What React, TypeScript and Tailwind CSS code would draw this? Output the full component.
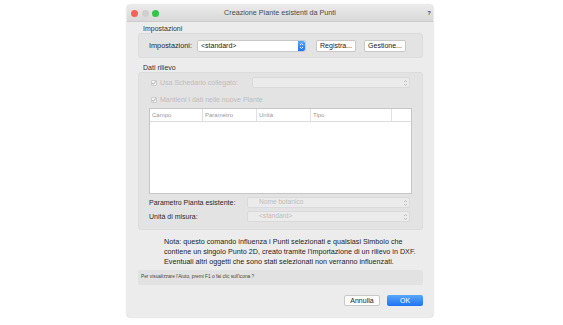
const font = "font-['Liberation_Sans',Arial,sans-serif]"

function Stepper({ active }: { active?: boolean }) {
  if (active) {
    return (
      <div className="flex h-full w-[7px] items-center justify-center rounded-r-[2px] bg-gradient-to-b from-[#5aa6fb] to-[#1f73f1]">
        <svg width="5" height="8" viewBox="0 0 5 8" fill="none">
          <path d="M1 3 L2.5 1.5 L4 3" stroke="white" strokeWidth="0.9" />
          <path d="M1 5 L2.5 6.5 L4 5" stroke="white" strokeWidth="0.9" />
        </svg>
      </div>
    )
  }
  return (
    <div className="flex h-full w-[8px] items-center justify-center">
      <svg width="5" height="8" viewBox="0 0 5 8" fill="none">
        <path d="M1 3 L2.5 1.5 L4 3" stroke="#b4b4b4" strokeWidth="0.8" />
        <path d="M1 5 L2.5 6.5 L4 5" stroke="#b4b4b4" strokeWidth="0.8" />
      </svg>
    </div>
  )
}

function DisabledSelect({ value, className }: { value?: string; className: string }) {
  return (
    <div className={`flex h-[11px] items-center rounded-[2px] border border-[#dadada] bg-[#ebebeb] ${className}`}>
      <span className="flex-1 pl-[11px] text-[6.6px] leading-none text-[#bcbcbc]">{value}</span>
      <Stepper />
    </div>
  )
}

function Check() {
  return (
    <div className="flex h-[6px] w-[6px] items-center justify-center rounded-[1px] border border-[#cccccc] bg-[#f4f4f4]">
      <svg width="6" height="6" viewBox="0 0 6 6" fill="none" className="shrink-0">
        <path d="M1.2 3.1 L2.4 4.3 L4.8 1.4" stroke="#999" strokeWidth="0.9" />
      </svg>
    </div>
  )
}

export default function App() {
  return (
    <div className={`h-[325px] w-[563px] overflow-hidden bg-white pl-[127px] pt-[5px] ${font}`}>
      <div className="flex h-[312px] w-[306px] flex-col rounded-[3px] bg-[#ececec] shadow-[0_0_2px_rgba(0,0,0,0.3)]">
        {/* title bar */}
        <div className="grid h-[17px] grid-cols-[40px_1fr_40px] items-center rounded-t-[3px] border-b border-[#cdcdcd] bg-gradient-to-b from-[#ebebeb] to-[#d8d8d8]">
          <div className="flex items-center gap-[3.5px] pl-[4px]">
            <span className="h-[7px] w-[7px] rounded-full bg-[#fc5f57]" />
            <span className="h-[7px] w-[7px] rounded-full bg-[#cfcfcf]" />
            <span className="h-[7px] w-[7px] rounded-full bg-[#31c648]" />
          </div>
          <div className="text-center text-[7.2px] leading-none text-[#4a4a4a]">
            Creazione Piante esistenti da Punti
          </div>
          <div className="pr-[2px] text-right text-[6px] font-bold leading-none text-[#444]">?</div>
        </div>

        <div className="flex flex-col pl-[11px] pr-[10px] text-[#2c2c2c]">
          <div className="mt-[2px] h-[9px] pl-[5px] text-[7px] leading-[9px] text-[#333]">Impostazioni</div>
          <div className="flex h-[25px] items-center rounded-[3px] border border-[#dcdcdc] bg-[#e3e3e3] pl-[10px]">
            <span className="w-[48px] text-[7.3px] font-medium leading-none text-[#2a2a2a]">Impostazioni:</span>
            <div className="flex h-[12px] w-[109px] items-center rounded-[2px] border border-[#c9c9c9] bg-white">
              <span className="flex-1 pl-[3px] text-[7px] leading-none text-[#222]">&lt;standard&gt;</span>
              <Stepper active />
            </div>
            <button className="ml-[10px] flex h-[12px] w-[40px] items-center justify-center rounded-[2px] border border-[#c8c8c8] bg-white text-[7px] leading-none text-[#222]">
              Registra...
            </button>
            <button className="ml-[8px] flex h-[12px] w-[42px] items-center justify-center rounded-[2px] border border-[#c8c8c8] bg-white text-[7px] leading-none text-[#222]">
              Gestione...
            </button>
          </div>

          <div className="mt-[5px] h-[9px] pl-[5px] text-[7px] leading-[9px] text-[#333]">Dati rilievo</div>
          <div className="flex h-[158px] flex-col rounded-[3px] border border-[#dcdcdc] bg-[#e3e3e3] pl-[10px] pr-[10px] pt-[4px]">
            <div className="flex h-[11px] items-center">
              <div className="ml-[2px]"><Check /></div>
              <span className="ml-[3px] w-[92px] text-[7px] leading-none text-[#bdbdbd]">Usa Schedario collegato:</span>
              <DisabledSelect className="ml-auto mr-[2px] w-[158px]" />
            </div>
            <div className="mt-[6px] flex h-[11px] items-center">
              <div className="ml-[2px]"><Check /></div>
              <span className="ml-[3px] text-[7px] leading-none text-[#bdbdbd]">Mantieni i dati nelle nuove Piante</span>
            </div>
            <div className="mt-[3px] flex h-[86px] flex-col border border-[#c6c6c6] bg-white">
              <div className="grid h-[13px] grid-cols-[53px_54px_54px_81px_1fr] border-b border-[#dcdcdc] text-[6px] leading-none text-[#999]">
                <div className="flex items-center border-r border-[#e0e0e0] pl-[2px]">Campo</div>
                <div className="flex items-center border-r border-[#e0e0e0] pl-[2px]">Parametro</div>
                <div className="flex items-center border-r border-[#e0e0e0] pl-[2px]">Unità</div>
                <div className="flex items-center border-r border-[#e0e0e0] pl-[2px]">Tipo</div>
                <div />
              </div>
            </div>
            <div className="mt-[3px] flex h-[11px] items-center">
              <span className="w-[98px] text-[7px] leading-none text-[#2a2a2a]">Parametro Pianta esistente:</span>
              <DisabledSelect value="Nome botanico" className="mr-[2px] flex-1" />
            </div>
            <div className="mt-[3px] flex h-[11px] items-center">
              <span className="w-[98px] text-[7px] leading-none text-[#2a2a2a]">Unità di misura:</span>
              <DisabledSelect value="<standard>" className="mr-[2px] flex-1" />
            </div>
          </div>

          <div className="mt-[7px] ml-[26px] whitespace-nowrap text-[7.2px] leading-[9.8px] text-[#1e1e1e]">
            <div>Nota: questo comando influenza i Punti selezionati e qualsiasi Simbolo che</div>
            <div>contiene un singolo Punto 2D, creato tramite l'importazione di un rilievo in DXF.</div>
            <div>Eventuali altri oggetti che sono stati selezionati non verranno influenzati.</div>
          </div>

          <div className="mt-[4px] flex h-[15px] items-center rounded-[2px] bg-[#e2e2e2] pl-[3px] text-[4.8px] leading-none text-[#444]">
            Per visualizzare l'Aiuto, premi F1 o fai clic sull'icona ?
          </div>

          <div className="mt-[10px] flex justify-end gap-[7px]">
            <button className="flex h-[11px] w-[36px] items-center justify-center rounded-[2px] border border-[#c8c8c8] bg-white text-[7px] leading-none text-[#222]">
              Annulla
            </button>
            <button className="flex h-[11px] w-[36px] items-center justify-center rounded-[2px] bg-gradient-to-b from-[#5aa6fb] to-[#1c72f2] text-[7px] leading-none text-white">
              OK
            </button>
          </div>
        </div>
      </div>
    </div>
  )
}
